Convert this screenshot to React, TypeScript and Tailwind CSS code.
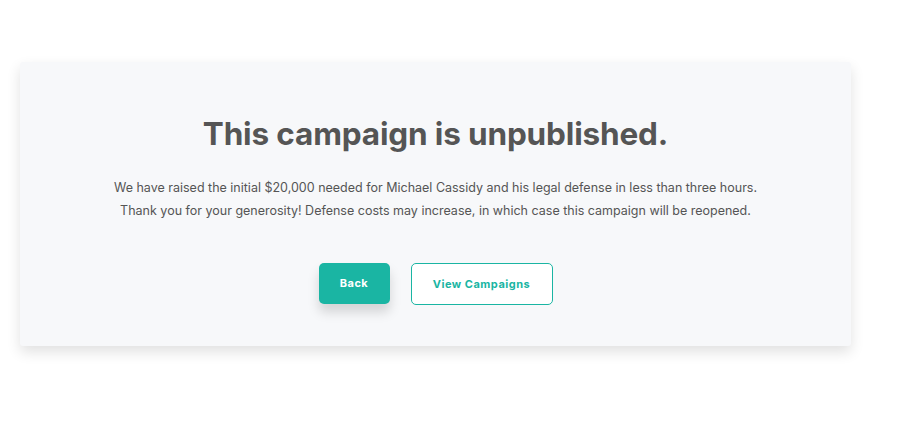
export default function App() {
  return (
    <div className="w-[900px] h-[427px] bg-white pt-[62px] pl-[20px]" style={{ fontFamily: '"Inter", "Noto Sans", sans-serif' }}>
      <div className="w-[831px] h-[284px] bg-[#f7f8fa] rounded-[3px] shadow-[0_6px_14px_rgba(0,0,0,0.12)] flex flex-col items-center pt-[52px]">
        <h1 className="text-[31.5px] leading-[40px] font-bold text-[#555555] tracking-[-0.15px]">This campaign is unpublished.</h1>
        <p className="mt-[22px] text-[12.5px] leading-[23px] text-[#555555] text-center">
          We have raised the initial $20,000 needed for Michael Cassidy and his legal defense in less than three hours.
          <br />
          Thank you for your generosity! Defense costs may increase, in which case this campaign will be reopened.
        </p>
        <div className="mt-[41px] flex gap-[21px]">
          <button className="w-[71px] h-[41px] rounded-[5px] bg-[#1ab5a3] text-white text-[11px] font-bold tracking-[0.5px] shadow-[0_8px_12px_rgba(0,0,0,0.15)]">Back</button>
          <button className="w-[142px] h-[42px] rounded-[5px] border border-[#1ab5a3] bg-white text-[#1ab5a3] text-[11px] font-bold tracking-[0.5px]">View Campaigns</button>
        </div>
      </div>
    </div>
  );
}
